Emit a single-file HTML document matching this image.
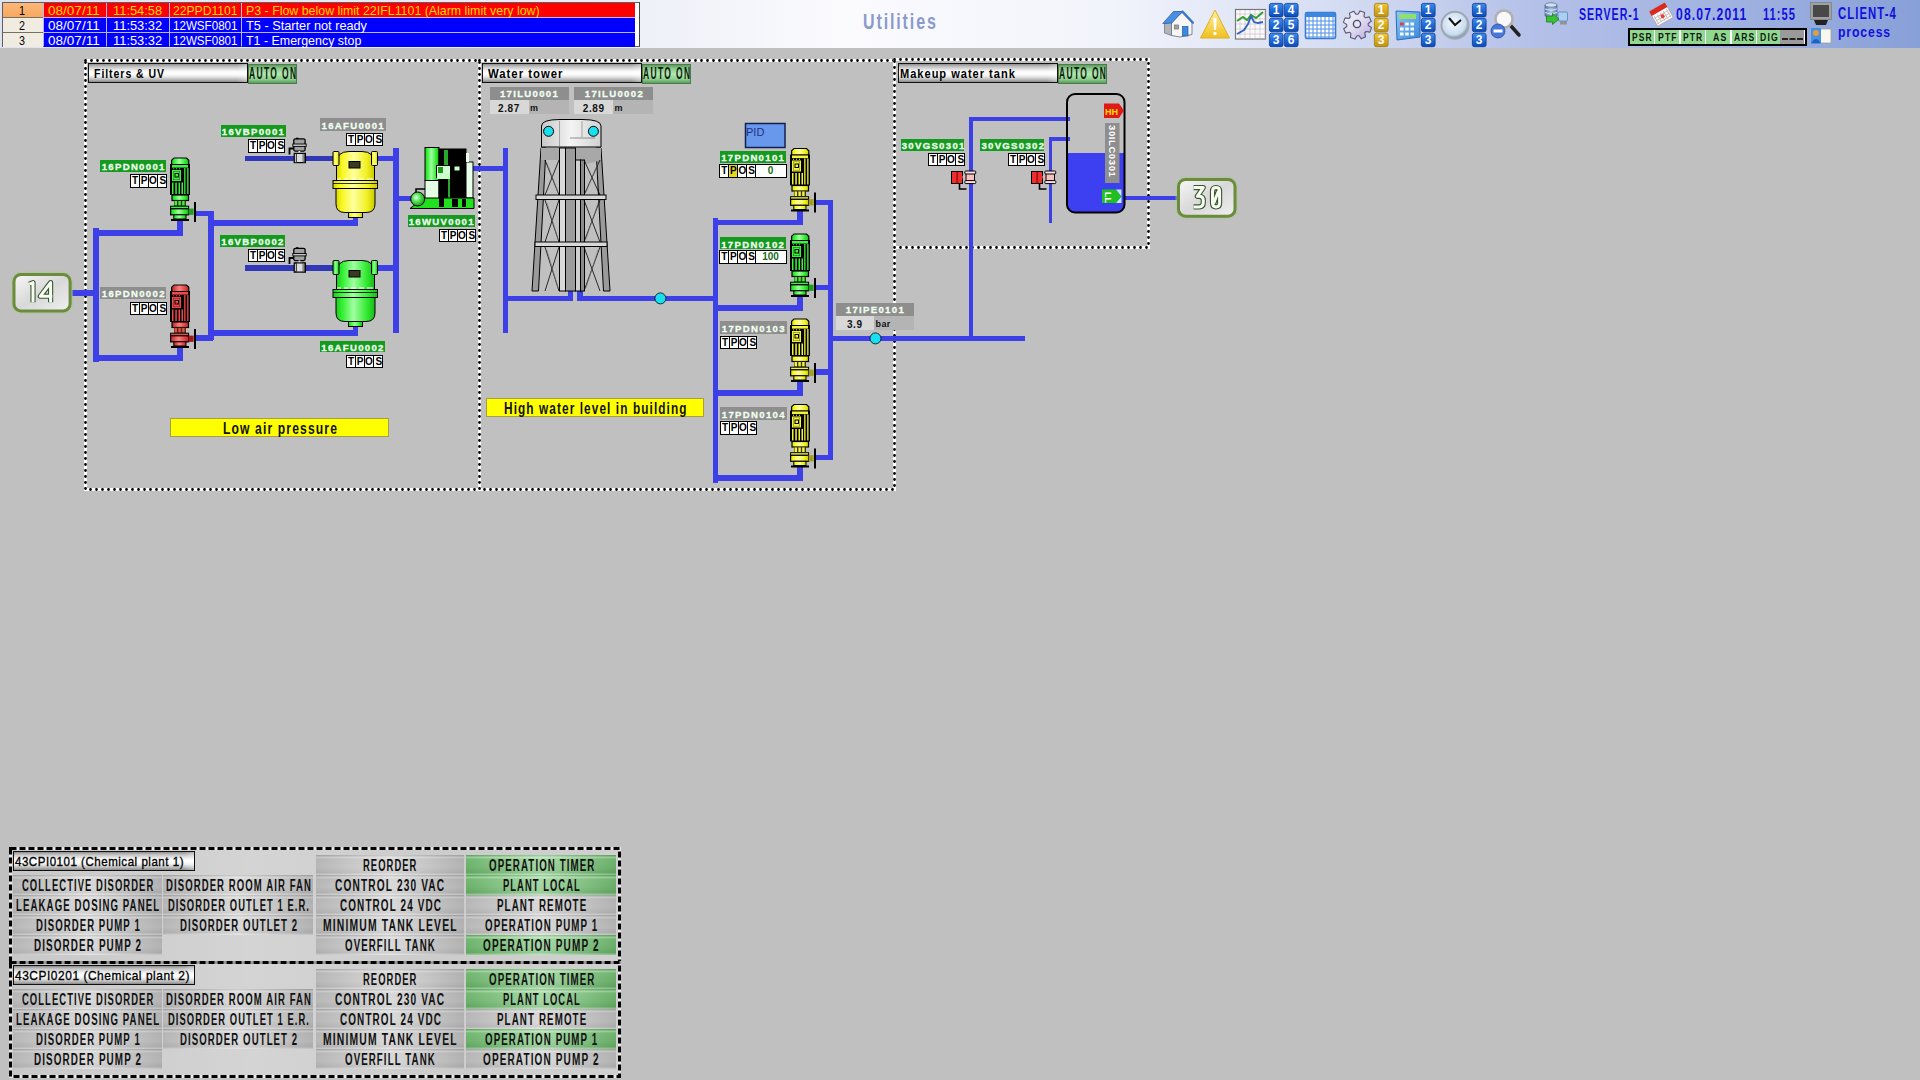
<!DOCTYPE html>
<html><head><meta charset="utf-8"><style>
*{box-sizing:border-box}
html,body{margin:0;padding:0}
body{width:1920px;height:1080px;background:#c0c0c0;position:relative;overflow:hidden;font-family:"Liberation Sans",sans-serif}
.a{position:absolute}
#hdr{left:0;top:0;width:1920px;height:48px;background:linear-gradient(90deg,#dde3f1 0%,#eef0f8 33%,#fbfbfe 44%,#f2f4fb 58%,#d4dcf2 70%,#b4c0e8 80%,#a0b2e0 90%,#88a0d8 100%)}
#alarm{left:2px;top:2px;width:638px;height:45px;border:1px solid #555;background:#fff}
.ar{position:absolute;left:0;width:633px;height:15px;font-size:11.5px;line-height:14px;white-space:nowrap}
.ar div{position:absolute;top:0;height:14px;padding-left:3px;overflow:hidden}
.title{left:842px;top:8px;width:115px;text-align:center;font-size:22px;font-weight:bold;color:#8d9fce;letter-spacing:1.5px}
.lbl{position:absolute;height:12px;font-size:9.6px;font-weight:bold;color:#f0fff0;text-align:center;letter-spacing:1.3px;white-space:nowrap;padding-left:1px;-webkit-text-stroke:.3px #f0fff0}
.g{background:#149a1e}
.gr{background:#8e8e8e}
.tp{position:absolute;height:13px;background:#fff;border:1.5px solid #000;font-size:10px;font-weight:bold;line-height:10.5px;white-space:nowrap}
.tp span{position:absolute;top:0;height:100%;line-height:12.5px;text-align:center;border-right:1.5px solid #000}
.pt{position:absolute;height:20px;border:1.6px solid #111;background:linear-gradient(#8c8c8c 0%,#c4c4c4 15%,#f8f8f8 40%,#fff 55%,#e8e8e8 70%,#b4b4b4 88%,#888 100%)}
.pt:after{content:"";position:absolute;right:0;top:0;bottom:0;width:10px;background:linear-gradient(90deg,rgba(255,255,255,0),rgba(255,255,255,.35))}
.au{position:absolute;height:20px;background:linear-gradient(#5c9c5c 0%,#8cc88c 20%,#b4e8b4 50%,#8ccc8c 80%,#5a9a5a 100%);border:1px solid #4c7c4c}
.au span,.btn span{display:inline-block;transform:scaleX(.82)}
.btn{position:absolute;height:20px;font-size:16.5px;line-height:21px;text-align:center;color:#111;white-space:nowrap;overflow:hidden;
 background:linear-gradient(#a8a8a8 0%,#d8d8d8 12%,#c4c4c4 20%,#c8c8c8 60%,#bcbcbc 88%,#dcdcdc 100%);}
.btn:before{content:"";position:absolute;left:0;top:0;right:0;bottom:0;background:linear-gradient(90deg,rgba(0,0,0,.08),rgba(255,255,255,.35) 50%,rgba(0,0,0,.1))}
.btn span{position:absolute;left:50%;top:0;transform:translateX(-50%) scaleX(.76)}
.gb{background:linear-gradient(#5aa85a 0%,#a6e0a6 12%,#7cc67c 20%,#74c074 60%,#68b468 88%,#a8dca8 100%)}
</style></head><body>
<div id="hdr" class="a"></div>
<div class="a" style="left:2px;top:2px;width:638px;height:45px;background:#b8b8f0;border:1px solid #606060;border-right:1px solid #404040"></div><div class="a" style="left:635px;top:3px;width:4px;height:43px;background:#fff"></div><div class="a" style="left:3px;top:3px;width:40px;height:14px;background:linear-gradient(#fcb878,#f8a860)"></div><span class="a" style="left:18.5px;top:5.33px;white-space:nowrap;transform-origin:0 0;transform:scaleX(0.8747);font-size:12.32px;line-height:12.32px;font-weight:normal;color:#000;">1</span><div class="a" style="left:44px;top:3px;width:62px;height:14px;background:#ff0000"></div><span class="a" style="left:48.3px;top:5.33px;white-space:nowrap;transform-origin:0 0;transform:scaleX(1.0996);font-size:12.32px;line-height:12.32px;font-weight:normal;color:#ffd800;">08/07/11</span><div class="a" style="left:107px;top:3px;width:62px;height:14px;background:#ff0000"></div><span class="a" style="left:113.3px;top:5.33px;white-space:nowrap;transform-origin:0 0;transform:scaleX(1.0465);font-size:12.32px;line-height:12.32px;font-weight:normal;color:#ffd800;">11:54:58</span><div class="a" style="left:170px;top:3px;width:71px;height:14px;background:#ff0000"></div><span class="a" style="left:172.5px;top:5.33px;white-space:nowrap;transform-origin:0 0;transform:scaleX(0.9847);font-size:12.32px;line-height:12.32px;font-weight:normal;color:#ffd800;">22PPD1101</span><div class="a" style="left:242px;top:3px;width:393px;height:14px;background:#ff0000"></div><span class="a" style="left:245.7px;top:5.33px;white-space:nowrap;transform-origin:0 0;transform:scaleX(1.0057);font-size:12.32px;line-height:12.32px;font-weight:normal;color:#ffd800;">P3 - Flow below limit 22IFL1101 (Alarm limit very low)</span><div class="a" style="left:3px;top:18px;width:40px;height:14px;background:#f0ece2"></div><span class="a" style="left:18.5px;top:20.33px;white-space:nowrap;transform-origin:0 0;transform:scaleX(0.8747);font-size:12.32px;line-height:12.32px;font-weight:normal;color:#000;">2</span><div class="a" style="left:44px;top:18px;width:62px;height:14px;background:#0000ff"></div><span class="a" style="left:48.3px;top:20.33px;white-space:nowrap;transform-origin:0 0;transform:scaleX(1.0996);font-size:12.32px;line-height:12.32px;font-weight:normal;color:#ffffff;">08/07/11</span><div class="a" style="left:107px;top:18px;width:62px;height:14px;background:#0000ff"></div><span class="a" style="left:113.3px;top:20.33px;white-space:nowrap;transform-origin:0 0;transform:scaleX(1.0465);font-size:12.32px;line-height:12.32px;font-weight:normal;color:#ffffff;">11:53:32</span><div class="a" style="left:170px;top:18px;width:71px;height:14px;background:#0000ff"></div><span class="a" style="left:172.5px;top:20.33px;white-space:nowrap;transform-origin:0 0;transform:scaleX(0.9423);font-size:12.32px;line-height:12.32px;font-weight:normal;color:#ffffff;">12WSF0801</span><div class="a" style="left:242px;top:18px;width:393px;height:14px;background:#0000ff"></div><span class="a" style="left:245.7px;top:20.33px;white-space:nowrap;transform-origin:0 0;transform:scaleX(1.0339);font-size:12.32px;line-height:12.32px;font-weight:normal;color:#ffffff;">T5 - Starter not ready</span><div class="a" style="left:3px;top:33px;width:40px;height:14px;background:#f0ece2"></div><span class="a" style="left:18.5px;top:35.33px;white-space:nowrap;transform-origin:0 0;transform:scaleX(0.8747);font-size:12.32px;line-height:12.32px;font-weight:normal;color:#000;">3</span><div class="a" style="left:44px;top:33px;width:62px;height:14px;background:#0000ff"></div><span class="a" style="left:48.3px;top:35.33px;white-space:nowrap;transform-origin:0 0;transform:scaleX(1.0996);font-size:12.32px;line-height:12.32px;font-weight:normal;color:#ffffff;">08/07/11</span><div class="a" style="left:107px;top:33px;width:62px;height:14px;background:#0000ff"></div><span class="a" style="left:113.3px;top:35.33px;white-space:nowrap;transform-origin:0 0;transform:scaleX(1.0465);font-size:12.32px;line-height:12.32px;font-weight:normal;color:#ffffff;">11:53:32</span><div class="a" style="left:170px;top:33px;width:71px;height:14px;background:#0000ff"></div><span class="a" style="left:172.5px;top:35.33px;white-space:nowrap;transform-origin:0 0;transform:scaleX(0.9423);font-size:12.32px;line-height:12.32px;font-weight:normal;color:#ffffff;">12WSF0801</span><div class="a" style="left:242px;top:33px;width:393px;height:14px;background:#0000ff"></div><span class="a" style="left:245.7px;top:35.33px;white-space:nowrap;transform-origin:0 0;transform:scaleX(1.0089);font-size:12.32px;line-height:12.32px;font-weight:normal;color:#ffffff;">T1 - Emergency stop</span><div class="a" style="left:3px;top:17px;width:40px;height:1px;background:#787060"></div><div class="a" style="left:3px;top:32px;width:40px;height:1px;background:#787060"></div><span class="a" style="left:862.8px;top:12.27px;white-space:nowrap;transform-origin:0 0;transform:scaleX(0.7475);font-size:21.45px;line-height:21.45px;font-weight:bold;color:#8a9acc;letter-spacing:2.5px">Utilities</span><svg class="a" style="left:0;top:0" width="1920" height="1080" viewBox="0 0 1920 1080">
<defs>
<linearGradient id="lgy" x1="0" x2="1"><stop offset="0" stop-color="#d8d800"/><stop offset=".15" stop-color="#f8f820"/><stop offset=".45" stop-color="#ffffa0"/><stop offset=".8" stop-color="#f0f020"/><stop offset="1" stop-color="#c8c800"/></linearGradient>
<linearGradient id="lgg" x1="0" x2="1"><stop offset="0" stop-color="#20c820"/><stop offset=".15" stop-color="#30f030"/><stop offset=".45" stop-color="#a0ffa0"/><stop offset=".8" stop-color="#30e830"/><stop offset="1" stop-color="#18b818"/></linearGradient>
<linearGradient id="lgr" x1="0" x2="1"><stop offset="0" stop-color="#c02020"/><stop offset=".45" stop-color="#ff8080"/><stop offset="1" stop-color="#c82020"/></linearGradient>
<linearGradient id="lgtank" x1="0" x2="1"><stop offset="0" stop-color="#c8c8c8"/><stop offset=".5" stop-color="#f4f4f4"/><stop offset="1" stop-color="#d0d0d0"/></linearGradient>
<radialGradient id="rgs" cx=".4" cy=".4" r=".6"><stop offset="0" stop-color="#e0ffe0"/><stop offset=".5" stop-color="#50e050"/><stop offset="1" stop-color="#20a020"/></radialGradient>
<linearGradient id="box" x1="0" y1="0" x2="1" y2="1"><stop offset="0" stop-color="#f8f8f8"/><stop offset=".5" stop-color="#d8d8d8"/><stop offset="1" stop-color="#f0f0f0"/></linearGradient>
</defs>
<rect x="85.5" y="60.5" width="394" height="429" fill="none" stroke="#fff" stroke-width="3"/>
<rect x="85.5" y="60.5" width="394" height="429" fill="none" stroke="#000" stroke-width="2.8" stroke-dasharray="0 6" stroke-linecap="round"/>
<rect x="479.5" y="60.5" width="415" height="429" fill="none" stroke="#fff" stroke-width="3"/>
<rect x="479.5" y="60.5" width="415" height="429" fill="none" stroke="#000" stroke-width="2.8" stroke-dasharray="0 6" stroke-linecap="round"/>
<rect x="894.5" y="59.5" width="254" height="188" fill="none" stroke="#fff" stroke-width="3"/>
<rect x="894.5" y="59.5" width="254" height="188" fill="none" stroke="#000" stroke-width="2.8" stroke-dasharray="0 6" stroke-linecap="round"/>
<rect x="72" y="290" width="24" height="6" fill="#3c40e6"/>
<rect x="93" y="228" width="6" height="134" fill="#3c40e6"/>
<rect x="93" y="230" width="90" height="6" fill="#3c40e6"/>
<rect x="177" y="216" width="6" height="20" fill="#3c40e6"/>
<rect x="93" y="355" width="90" height="6" fill="#3c40e6"/>
<rect x="177" y="342" width="6" height="19" fill="#3c40e6"/>
<rect x="195" y="211" width="18" height="5" fill="#3c40e6"/>
<rect x="208" y="211" width="6" height="129" fill="#3c40e6"/>
<rect x="195" y="335" width="18" height="6" fill="#3c40e6"/>
<rect x="208" y="220" width="150" height="6" fill="#3c40e6"/>
<rect x="353" y="215" width="5" height="11" fill="#3c40e6"/>
<rect x="208" y="330" width="150" height="6" fill="#3c40e6"/>
<rect x="353" y="324" width="5" height="12" fill="#3c40e6"/>
<rect x="378" y="156" width="18" height="5" fill="#3c40e6"/>
<rect x="378" y="265" width="18" height="6" fill="#3c40e6"/>
<rect x="393" y="148" width="6" height="185" fill="#3c40e6"/>
<rect x="399" y="196" width="13" height="5" fill="#3c40e6"/>
<rect x="473" y="166" width="32" height="5" fill="#3c40e6"/>
<rect x="503" y="148" width="5" height="185" fill="#3c40e6"/>
<rect x="503" y="296" width="70" height="5" fill="#3c40e6"/>
<rect x="568" y="289" width="5" height="12" fill="#3c40e6"/>
<rect x="577" y="289" width="6" height="12" fill="#3c40e6"/>
<rect x="577" y="296" width="141" height="5" fill="#3c40e6"/>
<rect x="713" y="218" width="5" height="265" fill="#3c40e6"/>
<rect x="713" y="220" width="90" height="5" fill="#3c40e6"/>
<rect x="713" y="305" width="90" height="6" fill="#3c40e6"/>
<rect x="713" y="390" width="90" height="6" fill="#3c40e6"/>
<rect x="713" y="475" width="90" height="6" fill="#3c40e6"/>
<rect x="797" y="209" width="6" height="16" fill="#3c40e6"/>
<rect x="797" y="295" width="6" height="16" fill="#3c40e6"/>
<rect x="797" y="380" width="6" height="16" fill="#3c40e6"/>
<rect x="797" y="466" width="6" height="15" fill="#3c40e6"/>
<rect x="814" y="200" width="19" height="5" fill="#3c40e6"/>
<rect x="814" y="285" width="19" height="5" fill="#3c40e6"/>
<rect x="814" y="369" width="19" height="6" fill="#3c40e6"/>
<rect x="814" y="455" width="19" height="5" fill="#3c40e6"/>
<rect x="828" y="200" width="5" height="260" fill="#3c40e6"/>
<rect x="833" y="336" width="192" height="5" fill="#3c40e6"/>
<rect x="969" y="117" width="4" height="224" fill="#3c40e6"/>
<rect x="969" y="117" width="101" height="4" fill="#3c40e6"/>
<rect x="1049" y="137" width="3" height="86" fill="#3c40e6"/>
<rect x="1049" y="137" width="21" height="4" fill="#3c40e6"/>
<rect x="1124" y="196" width="53" height="4" fill="#3c40e6"/>
<rect x="245" y="156" width="89" height="5" fill="#3038b8"/>
<rect x="245" y="265" width="89" height="6" fill="#3038b8"/>
<g transform="translate(170,157)">
<path d="M4 1 H16.5 L18.8 3.2 V7.5 H1.6 V3.2 Z" fill="url(#lgg)" stroke="#000" stroke-width="1.2"/>
<rect x="0" y="7" width="20" height="31" fill="#000"/>
<rect x="2" y="8" width="16" height="2.6" fill="#40f040"/>
<path d="M3 11.8 H4 M6 11.8 H7 M9 11.8 H10" stroke="#40f040" stroke-width="1"/>
<rect x="2" y="13" width="9" height="11" fill="#40f040"/>
<rect x="5" y="16.5" width="3.5" height="3.5" fill="#40f040" stroke="#000" stroke-width="1"/>
<rect x="3.3" y="14.3" width="6.4" height="8.4" fill="none" stroke="#000" stroke-width=".6" stroke-opacity=".5"/>
<rect x="14.2" y="11" width="1.3" height="26" fill="#40f040"/>
<rect x="17.2" y="11" width="1.3" height="26" fill="#40f040"/>
<rect x="2" y="25.5" width="1.5" height="11.5" fill="#40f040"/>
<rect x="5.3" y="25.5" width="1.5" height="11.5" fill="#40f040"/>
<rect x="8.5" y="25.5" width="1.5" height="11.5" fill="#40f040"/>
<rect x="11.5" y="25.5" width="1.5" height="11.5" fill="#40f040"/>
<rect x="2" y="38" width="16.5" height="5.5" fill="url(#lgg)" stroke="#000" stroke-width="1.2"/>
<rect x="4" y="43.5" width="12" height="5.5" fill="#3a3a10"/>
<rect x="4.6" y="44" width="2.4" height="4.5" fill="#40f040"/>
<rect x="8.4" y="44" width="2.4" height="4.5" fill="#40f040"/>
<rect x="12.2" y="44" width="2.4" height="4.5" fill="#40f040"/>
<rect x="0.6" y="49.2" width="18" height="2.6" fill="#40f040" stroke="#000" stroke-width="1"/>
<rect x="0.6" y="51.8" width="18" height="6" fill="url(#lgg)" stroke="#000" stroke-width="1.2"/>
<rect x="18.6" y="51.6" width="5" height="6.3" fill="#20a020"/>
<rect x="24" y="45" width="2" height="20" fill="#000"/>
<rect x="3.8" y="57.8" width="12.2" height="4.2" fill="url(#lgg)" stroke="#000" stroke-width="1"/>
<rect x="1" y="62" width="18" height="2" fill="#000"/>
</g>
<g transform="translate(170,284)">
<path d="M4 1 H16.5 L18.8 3.2 V7.5 H1.6 V3.2 Z" fill="url(#lgr)" stroke="#000" stroke-width="1.2"/>
<rect x="0" y="7" width="20" height="31" fill="#000"/>
<rect x="2" y="8" width="16" height="2.6" fill="#f04848"/>
<path d="M3 11.8 H4 M6 11.8 H7 M9 11.8 H10" stroke="#f04848" stroke-width="1"/>
<rect x="2" y="13" width="9" height="11" fill="#f04848"/>
<rect x="5" y="16.5" width="3.5" height="3.5" fill="#f04848" stroke="#000" stroke-width="1"/>
<rect x="3.3" y="14.3" width="6.4" height="8.4" fill="none" stroke="#000" stroke-width=".6" stroke-opacity=".5"/>
<rect x="14.2" y="11" width="1.3" height="26" fill="#f04848"/>
<rect x="17.2" y="11" width="1.3" height="26" fill="#f04848"/>
<rect x="2" y="25.5" width="1.5" height="11.5" fill="#f04848"/>
<rect x="5.3" y="25.5" width="1.5" height="11.5" fill="#f04848"/>
<rect x="8.5" y="25.5" width="1.5" height="11.5" fill="#f04848"/>
<rect x="11.5" y="25.5" width="1.5" height="11.5" fill="#f04848"/>
<rect x="2" y="38" width="16.5" height="5.5" fill="url(#lgr)" stroke="#000" stroke-width="1.2"/>
<rect x="4" y="43.5" width="12" height="5.5" fill="#3a3a10"/>
<rect x="4.6" y="44" width="2.4" height="4.5" fill="#f04848"/>
<rect x="8.4" y="44" width="2.4" height="4.5" fill="#f04848"/>
<rect x="12.2" y="44" width="2.4" height="4.5" fill="#f04848"/>
<rect x="0.6" y="49.2" width="18" height="2.6" fill="#f04848" stroke="#000" stroke-width="1"/>
<rect x="0.6" y="51.8" width="18" height="6" fill="url(#lgr)" stroke="#000" stroke-width="1.2"/>
<rect x="18.6" y="51.6" width="5" height="6.3" fill="#a01818"/>
<rect x="24" y="45" width="2" height="20" fill="#000"/>
<rect x="3.8" y="57.8" width="12.2" height="4.2" fill="url(#lgr)" stroke="#000" stroke-width="1"/>
<rect x="1" y="62" width="18" height="2" fill="#000"/>
</g>
<g transform="translate(790,147.5)">
<path d="M4 1 H16.5 L18.8 3.2 V7.5 H1.6 V3.2 Z" fill="url(#lgy)" stroke="#000" stroke-width="1.2"/>
<rect x="0" y="7" width="20" height="31" fill="#000"/>
<rect x="2" y="8" width="16" height="2.6" fill="#f4f440"/>
<path d="M3 11.8 H4 M6 11.8 H7 M9 11.8 H10" stroke="#f4f440" stroke-width="1"/>
<rect x="2" y="13" width="9" height="11" fill="#f4f440"/>
<rect x="5" y="16.5" width="3.5" height="3.5" fill="#f4f440" stroke="#000" stroke-width="1"/>
<rect x="3.3" y="14.3" width="6.4" height="8.4" fill="none" stroke="#000" stroke-width=".6" stroke-opacity=".5"/>
<rect x="14.2" y="11" width="1.3" height="26" fill="#f4f440"/>
<rect x="17.2" y="11" width="1.3" height="26" fill="#f4f440"/>
<rect x="2" y="25.5" width="1.5" height="11.5" fill="#f4f440"/>
<rect x="5.3" y="25.5" width="1.5" height="11.5" fill="#f4f440"/>
<rect x="8.5" y="25.5" width="1.5" height="11.5" fill="#f4f440"/>
<rect x="11.5" y="25.5" width="1.5" height="11.5" fill="#f4f440"/>
<rect x="2" y="38" width="16.5" height="5.5" fill="url(#lgy)" stroke="#000" stroke-width="1.2"/>
<rect x="4" y="43.5" width="12" height="5.5" fill="#3a3a10"/>
<rect x="4.6" y="44" width="2.4" height="4.5" fill="#f4f440"/>
<rect x="8.4" y="44" width="2.4" height="4.5" fill="#f4f440"/>
<rect x="12.2" y="44" width="2.4" height="4.5" fill="#f4f440"/>
<rect x="0.6" y="49.2" width="18" height="2.6" fill="#f4f440" stroke="#000" stroke-width="1"/>
<rect x="0.6" y="51.8" width="18" height="6" fill="url(#lgy)" stroke="#000" stroke-width="1.2"/>
<rect x="18.6" y="51.6" width="5" height="6.3" fill="#a0a020"/>
<rect x="24" y="45" width="2" height="20" fill="#000"/>
<rect x="3.8" y="57.8" width="12.2" height="4.2" fill="url(#lgy)" stroke="#000" stroke-width="1"/>
<rect x="1" y="62" width="18" height="2" fill="#000"/>
</g>
<g transform="translate(790,233)">
<path d="M4 1 H16.5 L18.8 3.2 V7.5 H1.6 V3.2 Z" fill="url(#lgg)" stroke="#000" stroke-width="1.2"/>
<rect x="0" y="7" width="20" height="31" fill="#000"/>
<rect x="2" y="8" width="16" height="2.6" fill="#40f040"/>
<path d="M3 11.8 H4 M6 11.8 H7 M9 11.8 H10" stroke="#40f040" stroke-width="1"/>
<rect x="2" y="13" width="9" height="11" fill="#40f040"/>
<rect x="5" y="16.5" width="3.5" height="3.5" fill="#40f040" stroke="#000" stroke-width="1"/>
<rect x="3.3" y="14.3" width="6.4" height="8.4" fill="none" stroke="#000" stroke-width=".6" stroke-opacity=".5"/>
<rect x="14.2" y="11" width="1.3" height="26" fill="#40f040"/>
<rect x="17.2" y="11" width="1.3" height="26" fill="#40f040"/>
<rect x="2" y="25.5" width="1.5" height="11.5" fill="#40f040"/>
<rect x="5.3" y="25.5" width="1.5" height="11.5" fill="#40f040"/>
<rect x="8.5" y="25.5" width="1.5" height="11.5" fill="#40f040"/>
<rect x="11.5" y="25.5" width="1.5" height="11.5" fill="#40f040"/>
<rect x="2" y="38" width="16.5" height="5.5" fill="url(#lgg)" stroke="#000" stroke-width="1.2"/>
<rect x="4" y="43.5" width="12" height="5.5" fill="#3a3a10"/>
<rect x="4.6" y="44" width="2.4" height="4.5" fill="#40f040"/>
<rect x="8.4" y="44" width="2.4" height="4.5" fill="#40f040"/>
<rect x="12.2" y="44" width="2.4" height="4.5" fill="#40f040"/>
<rect x="0.6" y="49.2" width="18" height="2.6" fill="#40f040" stroke="#000" stroke-width="1"/>
<rect x="0.6" y="51.8" width="18" height="6" fill="url(#lgg)" stroke="#000" stroke-width="1.2"/>
<rect x="18.6" y="51.6" width="5" height="6.3" fill="#20a020"/>
<rect x="24" y="45" width="2" height="20" fill="#000"/>
<rect x="3.8" y="57.8" width="12.2" height="4.2" fill="url(#lgg)" stroke="#000" stroke-width="1"/>
<rect x="1" y="62" width="18" height="2" fill="#000"/>
</g>
<g transform="translate(790,318)">
<path d="M4 1 H16.5 L18.8 3.2 V7.5 H1.6 V3.2 Z" fill="url(#lgy)" stroke="#000" stroke-width="1.2"/>
<rect x="0" y="7" width="20" height="31" fill="#000"/>
<rect x="2" y="8" width="16" height="2.6" fill="#f4f440"/>
<path d="M3 11.8 H4 M6 11.8 H7 M9 11.8 H10" stroke="#f4f440" stroke-width="1"/>
<rect x="2" y="13" width="9" height="11" fill="#f4f440"/>
<rect x="5" y="16.5" width="3.5" height="3.5" fill="#f4f440" stroke="#000" stroke-width="1"/>
<rect x="3.3" y="14.3" width="6.4" height="8.4" fill="none" stroke="#000" stroke-width=".6" stroke-opacity=".5"/>
<rect x="14.2" y="11" width="1.3" height="26" fill="#f4f440"/>
<rect x="17.2" y="11" width="1.3" height="26" fill="#f4f440"/>
<rect x="2" y="25.5" width="1.5" height="11.5" fill="#f4f440"/>
<rect x="5.3" y="25.5" width="1.5" height="11.5" fill="#f4f440"/>
<rect x="8.5" y="25.5" width="1.5" height="11.5" fill="#f4f440"/>
<rect x="11.5" y="25.5" width="1.5" height="11.5" fill="#f4f440"/>
<rect x="2" y="38" width="16.5" height="5.5" fill="url(#lgy)" stroke="#000" stroke-width="1.2"/>
<rect x="4" y="43.5" width="12" height="5.5" fill="#3a3a10"/>
<rect x="4.6" y="44" width="2.4" height="4.5" fill="#f4f440"/>
<rect x="8.4" y="44" width="2.4" height="4.5" fill="#f4f440"/>
<rect x="12.2" y="44" width="2.4" height="4.5" fill="#f4f440"/>
<rect x="0.6" y="49.2" width="18" height="2.6" fill="#f4f440" stroke="#000" stroke-width="1"/>
<rect x="0.6" y="51.8" width="18" height="6" fill="url(#lgy)" stroke="#000" stroke-width="1.2"/>
<rect x="18.6" y="51.6" width="5" height="6.3" fill="#a0a020"/>
<rect x="24" y="45" width="2" height="20" fill="#000"/>
<rect x="3.8" y="57.8" width="12.2" height="4.2" fill="url(#lgy)" stroke="#000" stroke-width="1"/>
<rect x="1" y="62" width="18" height="2" fill="#000"/>
</g>
<g transform="translate(790,403.5)">
<path d="M4 1 H16.5 L18.8 3.2 V7.5 H1.6 V3.2 Z" fill="url(#lgy)" stroke="#000" stroke-width="1.2"/>
<rect x="0" y="7" width="20" height="31" fill="#000"/>
<rect x="2" y="8" width="16" height="2.6" fill="#f4f440"/>
<path d="M3 11.8 H4 M6 11.8 H7 M9 11.8 H10" stroke="#f4f440" stroke-width="1"/>
<rect x="2" y="13" width="9" height="11" fill="#f4f440"/>
<rect x="5" y="16.5" width="3.5" height="3.5" fill="#f4f440" stroke="#000" stroke-width="1"/>
<rect x="3.3" y="14.3" width="6.4" height="8.4" fill="none" stroke="#000" stroke-width=".6" stroke-opacity=".5"/>
<rect x="14.2" y="11" width="1.3" height="26" fill="#f4f440"/>
<rect x="17.2" y="11" width="1.3" height="26" fill="#f4f440"/>
<rect x="2" y="25.5" width="1.5" height="11.5" fill="#f4f440"/>
<rect x="5.3" y="25.5" width="1.5" height="11.5" fill="#f4f440"/>
<rect x="8.5" y="25.5" width="1.5" height="11.5" fill="#f4f440"/>
<rect x="11.5" y="25.5" width="1.5" height="11.5" fill="#f4f440"/>
<rect x="2" y="38" width="16.5" height="5.5" fill="url(#lgy)" stroke="#000" stroke-width="1.2"/>
<rect x="4" y="43.5" width="12" height="5.5" fill="#3a3a10"/>
<rect x="4.6" y="44" width="2.4" height="4.5" fill="#f4f440"/>
<rect x="8.4" y="44" width="2.4" height="4.5" fill="#f4f440"/>
<rect x="12.2" y="44" width="2.4" height="4.5" fill="#f4f440"/>
<rect x="0.6" y="49.2" width="18" height="2.6" fill="#f4f440" stroke="#000" stroke-width="1"/>
<rect x="0.6" y="51.8" width="18" height="6" fill="url(#lgy)" stroke="#000" stroke-width="1.2"/>
<rect x="18.6" y="51.6" width="5" height="6.3" fill="#a0a020"/>
<rect x="24" y="45" width="2" height="20" fill="#000"/>
<rect x="3.8" y="57.8" width="12.2" height="4.2" fill="url(#lgy)" stroke="#000" stroke-width="1"/>
<rect x="1" y="62" width="18" height="2" fill="#000"/>
</g>
<g transform="translate(332,151)" stroke="#000" stroke-width="1">
<path d="M4.5 30 L4.5 13 Q4.5 0.5 17 0.5 L30 0.5 Q42.5 0.5 42.5 13 L42.5 30 Z" fill="url(#lgy)"/>
<rect x="1" y="0.5" width="6" height="14" rx="1" fill="url(#lgy)"/>
<rect x="39.5" y="0.5" width="6" height="14" rx="1" fill="url(#lgy)"/>
<rect x="17" y="10.5" width="11" height="6.5" fill="#3a3a20"/>
<path d="M5 28 H9 M12 28 H16 M19 28 H24 M27 28 H32 M35 28 H41" stroke="#fff" stroke-width="1.2"/>
<rect x="1" y="29.5" width="44.5" height="8" fill="url(#lgy)"/>
<line x1="1" y1="32.5" x2="45.5" y2="32.5" stroke-width=".8"/>
<path d="M4 37.5 L4 53 Q4 61.5 13 61.5 L34 61.5 Q43 61.5 43 53 L43 37.5 Z" fill="url(#lgy)"/>
<rect x="16.5" y="61.5" width="14" height="5" fill="url(#lgy)"/>
</g>
<g transform="translate(332,260)" stroke="#000" stroke-width="1">
<path d="M4.5 30 L4.5 13 Q4.5 0.5 17 0.5 L30 0.5 Q42.5 0.5 42.5 13 L42.5 30 Z" fill="url(#lgg)"/>
<rect x="1" y="0.5" width="6" height="14" rx="1" fill="url(#lgg)"/>
<rect x="39.5" y="0.5" width="6" height="14" rx="1" fill="url(#lgg)"/>
<rect x="17" y="10.5" width="11" height="6.5" fill="#3a3a20"/>
<path d="M5 28 H9 M12 28 H16 M19 28 H24 M27 28 H32 M35 28 H41" stroke="#fff" stroke-width="1.2"/>
<rect x="1" y="29.5" width="44.5" height="8" fill="url(#lgg)"/>
<line x1="1" y1="32.5" x2="45.5" y2="32.5" stroke-width=".8"/>
<path d="M4 37.5 L4 53 Q4 61.5 13 61.5 L34 61.5 Q43 61.5 43 53 L43 37.5 Z" fill="url(#lgg)"/>
<rect x="16.5" y="61.5" width="14" height="5" fill="url(#lgg)"/>
</g>
<g transform="translate(288.5,138)" stroke="#000">
<rect x="5.3" y="0.8" width="11.3" height="12.3" rx="1.5" fill="#a0a0a0" stroke-width="1.3"/>
<rect x="7.5" y="-0.3" width="2.5" height="1.5" fill="#000" stroke="none"/>
<rect x="4.3" y="6" width="13.4" height="2.4" fill="#c8c8c8" stroke-width=".9"/>
<rect x="10" y="13" width="1.8" height="3" fill="#e8e8e8" stroke="none"/>
<rect x="5.7" y="15.4" width="11.2" height="9.2" fill="#dcdcdc" stroke-width="1.2"/>
<rect x="6.4" y="15.4" width="1.6" height="9.2" fill="#fff" stroke-width=".7"/>
<rect x="14.6" y="15.4" width="1.6" height="9.2" fill="#fff" stroke-width=".7"/>
<path d="M1 16.5 V10.5 H5.3" fill="none" stroke-width="1.8"/>
</g>
<g transform="translate(288.5,247.5)" stroke="#000">
<rect x="5.3" y="0.8" width="11.3" height="12.3" rx="1.5" fill="#a0a0a0" stroke-width="1.3"/>
<rect x="7.5" y="-0.3" width="2.5" height="1.5" fill="#000" stroke="none"/>
<rect x="4.3" y="6" width="13.4" height="2.4" fill="#c8c8c8" stroke-width=".9"/>
<rect x="10" y="13" width="1.8" height="3" fill="#e8e8e8" stroke="none"/>
<rect x="5.7" y="15.4" width="11.2" height="9.2" fill="#dcdcdc" stroke-width="1.2"/>
<rect x="6.4" y="15.4" width="1.6" height="9.2" fill="#fff" stroke-width=".7"/>
<rect x="14.6" y="15.4" width="1.6" height="9.2" fill="#fff" stroke-width=".7"/>
<path d="M1 16.5 V10.5 H5.3" fill="none" stroke-width="1.8"/>
</g>
<g transform="translate(950,171)" stroke="#000" stroke-width="1">
<rect x="1.5" y="0.5" width="11" height="12" fill="#f03030"/>
<rect x="6.3" y="0.5" width="1.6" height="12" fill="#a01010" stroke="none"/>
<rect x="12.5" y="5" width="3" height="2.5" fill="#f4b0b0" stroke="none"/>
<rect x="16" y="2" width="8.5" height="9" fill="#f4c0c0"/>
<rect x="14.8" y="0" width="11" height="3" rx="1" fill="#fce0e0"/>
<rect x="14.8" y="9.6" width="11" height="3" rx="1" fill="#fce0e0"/>
<path d="M9.5 12.5 L9.5 18 L16.5 18" fill="none" stroke-width="1.6"/>
</g>
<g transform="translate(1030,171)" stroke="#000" stroke-width="1">
<rect x="1.5" y="0.5" width="11" height="12" fill="#f03030"/>
<rect x="6.3" y="0.5" width="1.6" height="12" fill="#a01010" stroke="none"/>
<rect x="12.5" y="5" width="3" height="2.5" fill="#f4b0b0" stroke="none"/>
<rect x="16" y="2" width="8.5" height="9" fill="#f4c0c0"/>
<rect x="14.8" y="0" width="11" height="3" rx="1" fill="#fce0e0"/>
<rect x="14.8" y="9.6" width="11" height="3" rx="1" fill="#fce0e0"/>
<path d="M9.5 12.5 L9.5 18 L16.5 18" fill="none" stroke-width="1.6"/>
</g>
<g stroke="#000" stroke-width="1">
<rect x="425" y="147.5" width="14" height="33" fill="url(#lgg)"/>
<rect x="425" y="180.5" width="14" height="18" fill="#e4ffe4"/>
<rect x="439" y="149" width="27" height="57" fill="#000"/>
<rect x="444" y="150" width="4" height="24" fill="#2aa82a" stroke="none"/>
<rect x="448" y="173" width="2" height="25" fill="#2aa82a" stroke="none"/>
<rect x="436.5" y="165.5" width="14" height="12" fill="#cfffcf"/>
<rect x="438" y="167" width="5" height="6" fill="#1a9a1a" stroke="none"/>
<rect x="437" y="174" width="13" height="5" fill="#c8ffc8" stroke="none"/>
<rect x="454" y="166" width="6" height="5" fill="#cfffcf"/>
<rect x="466" y="162" width="7" height="36" fill="#e8ffe8"/>
<rect x="466" y="153" width="3" height="9" fill="#e8ffe8" stroke="none"/>
<path d="M424 198 L474 198 L474 208.5 L410 208.5 Z" fill="#20e020"/>
<rect x="439" y="198" width="5" height="9" fill="#000" stroke="none"/><rect x="452" y="199" width="6" height="8" fill="#000" stroke="none"/><rect x="462" y="199" width="4" height="8" fill="#000" stroke="none"/>
<circle cx="417.7" cy="199" r="7" fill="url(#rgs)"/>
<path d="M416 192 L416 189 L425 189" fill="none" stroke-width="1.5"/>
</g>
<g stroke="#000" stroke-width="1">
<path d="M532 291 L541 148 L546 148 L538.5 291 Z" fill="#9a9a9a"/>
<path d="M610 291 L601 148 L596 148 L603.5 291 Z" fill="#9a9a9a"/>
<path d="M541 148 L601 148 L601 160 Q580 168 560 160 L541 160 Z" fill="#a8a8a8" stroke="none"/>
<rect x="559.5" y="148" width="6" height="143" fill="#d8d8d8"/>
<rect x="565.5" y="148" width="10" height="143" fill="#9c9c9c"/>
<rect x="575.5" y="160" width="5" height="131" fill="#d0d0d0"/>
<rect x="580.5" y="160" width="4" height="131" fill="#8a8a8a"/>
<path d="M545 160 L559 195 M559 160 L545 195 M584 160 L600 195 M600 160 L584 195" stroke-width=".8" fill="none"/>
<path d="M547 163 L558 192 M586 192 L598 163" stroke="#777" stroke-width=".6" fill="none"/>
<path d="M545 200 L559 242 M559 200 L545 242 M584 200 L600 242 M600 200 L584 242" stroke-width=".8" fill="none"/>
<path d="M547 203 L558 239 M586 239 L598 203" stroke="#777" stroke-width=".6" fill="none"/>
<path d="M545 247 L559 291 M559 247 L545 291 M584 247 L600 291 M600 247 L584 291" stroke-width=".8" fill="none"/>
<path d="M547 250 L558 288 M586 288 L598 250" stroke="#777" stroke-width=".6" fill="none"/>
<rect x="536" y="195" width="70" height="4.5" fill="#d8d8d8"/>
<rect x="535" y="242" width="72" height="4.5" fill="#d8d8d8"/>
<path d="M541.5 147 L541.5 126 Q541.5 119.5 560 119.5 L582 119.5 Q601 119.5 601 126 L601 147 Z" fill="url(#lgtank)"/>
<line x1="559.5" y1="121" x2="559.5" y2="147" stroke="#777" stroke-width=".6"/>
<line x1="582" y1="121" x2="582" y2="137" stroke="#777" stroke-width=".6"/>
<line x1="570" y1="138" x2="595" y2="138" stroke="#777" stroke-width=".8"/>
<circle cx="548.6" cy="131.3" r="5" fill="#18e0f0"/>
<circle cx="593.4" cy="131.3" r="5" fill="#18e0f0"/>
</g>
<circle cx="660.4" cy="298.4" r="5.5" fill="#18e0f0" stroke="#000" stroke-width=".8"/>
<circle cx="875.5" cy="338.4" r="5.5" fill="#18e0f0" stroke="#000" stroke-width=".8"/>
<rect x="745.5" y="123.5" width="39.5" height="24" fill="#6898ec" stroke="#102050" stroke-width="1.5"/>
<text x="746" y="136" font-family="Liberation Sans" font-size="11" fill="#203080">PID</text>
<path d="M1067 153 L1124.5 153 L1124.5 204 Q1124.5 212.5 1116 212.5 L1075 212.5 Q1067 212.5 1067 204 Z" fill="#3c40f0"/>
<rect x="1067" y="94" width="57.5" height="118.5" rx="8" fill="none" stroke="#000" stroke-width="2"/>
<path d="M1104 103.5 L1119 103.5 L1124 110.5 L1119 118 L1104 118 Z" fill="#e01818"/>
<text x="1105" y="114.5" font-family="Liberation Sans" font-weight="bold" font-size="9" fill="#ffe000">HH</text>
<rect x="1105" y="123" width="14.5" height="60" fill="#8e8e8e"/>
<text transform="translate(1108.5,125) rotate(90)" font-family="Liberation Sans" font-weight="bold" font-size="9.5" fill="#fff" letter-spacing=".6">30ILC0301</text>
<path d="M1102 189.5 L1116 189.5 L1121.5 196.5 L1116 203 L1102 203 Z" fill="#20c020"/>
<path d="M1116 189.5 L1121.5 189.5 L1121.5 203 L1116 203 L1121.5 196.5 Z" fill="#c8e8f8"/>
<text transform="translate(1105,192) rotate(90)" font-family="Liberation Sans" font-weight="bold" font-size="9" fill="#fff">LL</text>
<rect x="14.0" y="274.5" width="56.099999999999994" height="36.39999999999998" rx="8" fill="none" stroke="#a8c890" stroke-opacity=".5" stroke-width="6"/>
<rect x="14.0" y="274.5" width="56.099999999999994" height="36.39999999999998" rx="7" fill="url(#box)" stroke="#6a8c3c" stroke-width="3"/>
<path d="M29.3 284.2 L33 282.6 V302.3 M50.6 302.3 V282.6 L40.3 296.2 H52.4" fill="none" stroke="#3c5434" stroke-width="5.2" stroke-linejoin="round"/>
<path d="M29.3 284.2 L33 282.6 V302.3 M50.6 302.3 V282.6 L40.3 296.2 H52.4" fill="none" stroke="#f6fff0" stroke-width="3" stroke-linejoin="round"/>
<rect x="1178.5" y="179.5" width="56.5" height="36.69999999999999" rx="8" fill="none" stroke="#a8c890" stroke-opacity=".5" stroke-width="6"/>
<rect x="1178.5" y="179.5" width="56.5" height="36.69999999999999" rx="7" fill="url(#box)" stroke="#6a8c3c" stroke-width="3"/>
<path d="M1193.6 187.6 H1203.3 L1197.3 196.3 H1199.2 Q1203.3 196.3 1203.3 200.5 V202.6 Q1203.3 206.9 1199.2 206.9 H1193.6 M1216 187.6 Q1219.6 187.6 1219.6 191.5 V203 Q1219.6 206.9 1216 206.9 Q1212.5 206.9 1212.5 203 V191.5 Q1212.5 187.6 1216 187.6 Z M1213.6 203.5 L1218.5 191" fill="none" stroke="#3c5434" stroke-width="5.2" stroke-linejoin="round"/>
<path d="M1193.6 187.6 H1203.3 L1197.3 196.3 H1199.2 Q1203.3 196.3 1203.3 200.5 V202.6 Q1203.3 206.9 1199.2 206.9 H1193.6 M1216 187.6 Q1219.6 187.6 1219.6 191.5 V203 Q1219.6 206.9 1216 206.9 Q1212.5 206.9 1212.5 203 V191.5 Q1212.5 187.6 1216 187.6 Z M1213.6 203.5 L1218.5 191" fill="none" stroke="#f6fff0" stroke-width="3" stroke-linejoin="round"/>
</svg>
<div class="lbl g" style="left:220.5px;top:125px;width:65.0px;height:12px;line-height:14.5px">16VBP0001</div>
<div class="tp" style="left:248px;top:139px;width:37px;height:13.5px"><span style="left:0px;width:9px">T</span><span style="left:9px;width:9px">P</span><span style="left:18px;width:9px">O</span><span style="left:27.5px;width:8.5px;border-right:none">S</span></div>
<div class="lbl gr" style="left:320px;top:117.5px;width:65.5px;height:13.0px;line-height:15.5px">16AFU0001</div>
<div class="tp" style="left:346px;top:132.5px;width:37px;height:13.5px"><span style="left:0px;width:9px">T</span><span style="left:9px;width:9px">P</span><span style="left:18px;width:9px">O</span><span style="left:27.5px;width:8.5px;border-right:none">S</span></div>
<div class="lbl g" style="left:100.4px;top:160px;width:65.6px;height:12px;line-height:14.5px">16PDN0001</div>
<div class="tp" style="left:130px;top:174px;width:37px;height:13.5px"><span style="left:0px;width:9px">T</span><span style="left:9px;width:9px">P</span><span style="left:18px;width:9px">O</span><span style="left:27.5px;width:8.5px;border-right:none">S</span></div>
<div class="lbl gr" style="left:100.4px;top:286.7px;width:65.79999999999998px;height:12.199999999999989px;line-height:14.699999999999989px">16PDN0002</div>
<div class="tp" style="left:130px;top:301.5px;width:37px;height:13.5px"><span style="left:0px;width:9px">T</span><span style="left:9px;width:9px">P</span><span style="left:18px;width:9px">O</span><span style="left:27.5px;width:8.5px;border-right:none">S</span></div>
<div class="lbl g" style="left:220px;top:235px;width:65px;height:12px;line-height:14.5px">16VBP0002</div>
<div class="tp" style="left:248px;top:248.5px;width:37px;height:13.5px"><span style="left:0px;width:9px">T</span><span style="left:9px;width:9px">P</span><span style="left:18px;width:9px">O</span><span style="left:27.5px;width:8.5px;border-right:none">S</span></div>
<div class="lbl g" style="left:320px;top:340.5px;width:65px;height:11.5px;line-height:14.0px">16AFU0002</div>
<div class="tp" style="left:346px;top:354.5px;width:37px;height:13.5px"><span style="left:0px;width:9px">T</span><span style="left:9px;width:9px">P</span><span style="left:18px;width:9px">O</span><span style="left:27.5px;width:8.5px;border-right:none">S</span></div>
<div class="lbl g" style="left:407.5px;top:215px;width:67.5px;height:11.5px;line-height:14.0px">16WUV0001</div>
<div class="tp" style="left:439px;top:228.5px;width:37px;height:13.5px"><span style="left:0px;width:9px">T</span><span style="left:9px;width:9px">P</span><span style="left:18px;width:9px">O</span><span style="left:27.5px;width:8.5px;border-right:none">S</span></div>
<div class="lbl g" style="left:719.7px;top:150.5px;width:66.0px;height:12.300000000000011px;line-height:14.800000000000011px">17PDN0101</div>
<div class="tp" style="left:719.3px;top:164px;width:67.40000000000009px;height:13.5px"><span style="left:0px;width:9px">T</span><span style="left:9px;width:9px;background:#e8d820">P</span><span style="left:18px;width:9px">O</span><span style="left:27.5px;width:8.5px">S</span><span style="left:36px;width:28.40000000000009px;border:none;color:#1a6a1a;font-size:10px">0</span></div>
<div class="lbl g" style="left:719.7px;top:236.7px;width:66.0px;height:12.800000000000011px;line-height:15.300000000000011px">17PDN0102</div>
<div class="tp" style="left:719.3px;top:250.4px;width:67.40000000000009px;height:13.5px"><span style="left:0px;width:9px">T</span><span style="left:9px;width:9px">P</span><span style="left:18px;width:9px">O</span><span style="left:27.5px;width:8.5px">S</span><span style="left:36px;width:28.40000000000009px;border:none;color:#1a6a1a;font-size:10px">100</span></div>
<div class="lbl gr" style="left:720px;top:321.3px;width:66.70000000000005px;height:13.0px;line-height:15.5px">17PDN0103</div>
<div class="tp" style="left:720px;top:335.5px;width:37px;height:13.5px"><span style="left:0px;width:9px">T</span><span style="left:9px;width:9px">P</span><span style="left:18px;width:9px">O</span><span style="left:27.5px;width:8.5px;border-right:none">S</span></div>
<div class="lbl gr" style="left:720px;top:407.4px;width:66.70000000000005px;height:13.0px;line-height:15.5px">17PDN0104</div>
<div class="tp" style="left:720px;top:421.3px;width:37px;height:13.5px"><span style="left:0px;width:9px">T</span><span style="left:9px;width:9px">P</span><span style="left:18px;width:9px">O</span><span style="left:27.5px;width:8.5px;border-right:none">S</span></div>
<div class="lbl g" style="left:900.7px;top:139.3px;width:63.69999999999993px;height:12.0px;line-height:14.5px">30VGS0301</div>
<div class="tp" style="left:928px;top:152.5px;width:37px;height:13.5px"><span style="left:0px;width:9px">T</span><span style="left:9px;width:9px">P</span><span style="left:18px;width:9px">O</span><span style="left:27.5px;width:8.5px;border-right:none">S</span></div>
<div class="lbl g" style="left:980.4px;top:139.3px;width:63.30000000000007px;height:12.0px;line-height:14.5px">30VGS0302</div>
<div class="tp" style="left:1008px;top:152.5px;width:37px;height:13.5px"><span style="left:0px;width:9px">T</span><span style="left:9px;width:9px">P</span><span style="left:18px;width:9px">O</span><span style="left:27.5px;width:8.5px;border-right:none">S</span></div>
<div class="lbl gr" style="left:489.5px;top:86.5px;width:79.0px;height:13px;line-height:13px">17ILU0001</div>
<div class="a" style="left:489.5px;top:99.5px;width:79.0px;height:14px;background:#b4b4b4"></div>
<div class="a" style="left:489.5px;top:99.5px;width:39.0px;height:14px;background:#d8d8d8;font-size:10px;font-weight:bold;color:#111;text-align:center;line-height:17px;letter-spacing:.6px">2.87</div>
<div class="a" style="left:530.0px;top:99.5px;font-size:9px;font-weight:bold;color:#111;line-height:16px;letter-spacing:.4px">m</div>
<div class="lbl gr" style="left:574.4px;top:86.5px;width:79.10000000000002px;height:13px;line-height:13px">17ILU0002</div>
<div class="a" style="left:574.4px;top:99.5px;width:79.10000000000002px;height:14px;background:#b4b4b4"></div>
<div class="a" style="left:574.4px;top:99.5px;width:38.60000000000002px;height:14px;background:#d8d8d8;font-size:10px;font-weight:bold;color:#111;text-align:center;line-height:17px;letter-spacing:.6px">2.89</div>
<div class="a" style="left:614.5px;top:99.5px;font-size:9px;font-weight:bold;color:#111;line-height:16px;letter-spacing:.4px">m</div>
<div class="lbl gr" style="left:835.5px;top:303.3px;width:78.89999999999998px;height:13px;line-height:13px">17IPE0101</div>
<div class="a" style="left:835.5px;top:316.3px;width:78.89999999999998px;height:14px;background:#b4b4b4"></div>
<div class="a" style="left:835.5px;top:316.3px;width:38.5px;height:14px;background:#d8d8d8;font-size:10px;font-weight:bold;color:#111;text-align:center;line-height:17px;letter-spacing:.6px">3.9</div>
<div class="a" style="left:875.5px;top:316.3px;font-size:9px;font-weight:bold;color:#111;line-height:16px;letter-spacing:.4px">bar</div>
<div class="pt" style="left:88px;top:63px;width:160px"></div>
<span class="a" style="left:93.75px;top:67.34px;white-space:nowrap;transform-origin:0 0;transform:scaleX(0.7824);font-size:13.48px;line-height:13.48px;font-weight:bold;color:#000;letter-spacing:1.2px">Filters &amp; UV</span>
<div class="au" style="left:248px;top:63.5px;width:49px"></div>
<span class="a" style="left:248.75px;top:65.8px;white-space:nowrap;transform-origin:0 0;transform:scaleX(0.5412);font-size:15.65px;line-height:15.65px;font-weight:bold;color:#0c200c;letter-spacing:2.5px">AUTO ON</span>
<div class="pt" style="left:482px;top:63px;width:159.5px"></div>
<span class="a" style="left:488px;top:67.34px;white-space:nowrap;transform-origin:0 0;transform:scaleX(0.8408);font-size:13.48px;line-height:13.48px;font-weight:bold;color:#000;letter-spacing:1.2px">Water tower</span>
<div class="au" style="left:641.5px;top:63.5px;width:49.5px"></div>
<span class="a" style="left:642.7px;top:65.8px;white-space:nowrap;transform-origin:0 0;transform:scaleX(0.5428);font-size:15.65px;line-height:15.65px;font-weight:bold;color:#0c200c;letter-spacing:2.5px">AUTO ON</span>
<div class="pt" style="left:898px;top:63px;width:159.5999999999999px"></div>
<span class="a" style="left:900.2px;top:67.34px;white-space:nowrap;transform-origin:0 0;transform:scaleX(0.8217);font-size:13.48px;line-height:13.48px;font-weight:bold;color:#000;letter-spacing:1.2px">Makeup water tank</span>
<div class="au" style="left:1057.6px;top:63.5px;width:49.100000000000136px"></div>
<span class="a" style="left:1058.9px;top:65.8px;white-space:nowrap;transform-origin:0 0;transform:scaleX(0.5406);font-size:15.65px;line-height:15.65px;font-weight:bold;color:#0c200c;letter-spacing:2.5px">AUTO ON</span>
<div class="a" style="left:170px;top:418.3px;width:219.39999999999998px;height:19.0px;background:#ffff00;border:1px solid #a8a040"></div>
<span class="a" style="left:222.5px;top:420.0px;white-space:nowrap;transform-origin:0 0;transform:scaleX(0.7477);font-size:16.23px;line-height:16.23px;font-weight:bold;color:#111;letter-spacing:1.5px">Low air pressure</span>
<div class="a" style="left:485.6px;top:398.2px;width:218.60000000000002px;height:19.19999999999999px;background:#ffff00;border:1px solid #a8a040"></div>
<span class="a" style="left:503.9px;top:399.9px;white-space:nowrap;transform-origin:0 0;transform:scaleX(0.7287);font-size:16.23px;line-height:16.23px;font-weight:bold;color:#111;letter-spacing:1.5px">High water level in building</span>
<div class="a" style="left:11px;top:849px;width:608px;height:227px;background:linear-gradient(90deg,#c8c8c8,#d4d4d4 40%,#cccccc 70%,#d0d0d0)"></div>
<div class="pt" style="left:13px;top:851px;width:182px"></div>
<span class="a" style="left:15px;top:855.37px;white-space:nowrap;transform-origin:0 0;transform:scaleX(0.8651);font-size:13.33px;line-height:13.33px;font-weight:normal;color:#000;-webkit-text-stroke:.35px #000;letter-spacing:.6px">43CPI0101 (Chemical plant 1)</span>
<div class="btn" style="left:13px;top:875px;width:149px"></div>
<span class="a" style="left:22.099999999999994px;top:878.25px;white-space:nowrap;transform-origin:0 0;transform:scaleX(0.5914);font-size:15.94px;line-height:15.94px;font-weight:bold;color:#111;letter-spacing:1.8px">COLLECTIVE DISORDER</span>
<div class="btn" style="left:13px;top:895px;width:149px"></div>
<span class="a" style="left:16.150000000000006px;top:898.25px;white-space:nowrap;transform-origin:0 0;transform:scaleX(0.6047);font-size:15.94px;line-height:15.94px;font-weight:bold;color:#111;letter-spacing:1.8px">LEAKAGE DOSING PANEL</span>
<div class="btn" style="left:13px;top:915px;width:149px"></div>
<span class="a" style="left:35.85px;top:918.25px;white-space:nowrap;transform-origin:0 0;transform:scaleX(0.6002);font-size:15.94px;line-height:15.94px;font-weight:bold;color:#111;letter-spacing:1.8px">DISORDER PUMP 1</span>
<div class="btn" style="left:13px;top:935px;width:149px"></div>
<span class="a" style="left:34.15px;top:938.25px;white-space:nowrap;transform-origin:0 0;transform:scaleX(0.6197);font-size:15.94px;line-height:15.94px;font-weight:bold;color:#111;letter-spacing:1.8px">DISORDER PUMP 2</span>
<div class="btn" style="left:163px;top:875px;width:150px"></div>
<span class="a" style="left:165.75px;top:878.25px;white-space:nowrap;transform-origin:0 0;transform:scaleX(0.5995);font-size:15.94px;line-height:15.94px;font-weight:bold;color:#111;letter-spacing:1.8px">DISORDER ROOM AIR FAN</span>
<div class="btn" style="left:163px;top:895px;width:150px"></div>
<span class="a" style="left:167.75px;top:898.25px;white-space:nowrap;transform-origin:0 0;transform:scaleX(0.5902);font-size:15.94px;line-height:15.94px;font-weight:bold;color:#111;letter-spacing:1.8px">DISORDER OUTLET 1 E.R.</span>
<div class="btn" style="left:163px;top:915px;width:150px"></div>
<span class="a" style="left:179.65px;top:918.25px;white-space:nowrap;transform-origin:0 0;transform:scaleX(0.6025);font-size:15.94px;line-height:15.94px;font-weight:bold;color:#111;letter-spacing:1.8px">DISORDER OUTLET 2</span>
<div class="btn" style="left:315.5px;top:855px;width:148.5px"></div>
<span class="a" style="left:363.3px;top:858.25px;white-space:nowrap;transform-origin:0 0;transform:scaleX(0.5894);font-size:15.94px;line-height:15.94px;font-weight:bold;color:#111;letter-spacing:1.8px">REORDER</span>
<div class="btn" style="left:315.5px;top:875px;width:148.5px"></div>
<span class="a" style="left:335.35px;top:878.25px;white-space:nowrap;transform-origin:0 0;transform:scaleX(0.6360);font-size:15.94px;line-height:15.94px;font-weight:bold;color:#111;letter-spacing:1.8px">CONTROL 230 VAC</span>
<div class="btn" style="left:315.5px;top:895px;width:148.5px"></div>
<span class="a" style="left:339.5px;top:898.25px;white-space:nowrap;transform-origin:0 0;transform:scaleX(0.6222);font-size:15.94px;line-height:15.94px;font-weight:bold;color:#111;letter-spacing:1.8px">CONTROL 24 VDC</span>
<div class="btn" style="left:315.5px;top:915px;width:148.5px"></div>
<span class="a" style="left:323.15px;top:918.25px;white-space:nowrap;transform-origin:0 0;transform:scaleX(0.6495);font-size:15.94px;line-height:15.94px;font-weight:bold;color:#111;letter-spacing:1.8px">MINIMUM TANK LEVEL</span>
<div class="btn" style="left:315.5px;top:935px;width:148.5px"></div>
<span class="a" style="left:345.05px;top:938.25px;white-space:nowrap;transform-origin:0 0;transform:scaleX(0.6083);font-size:15.94px;line-height:15.94px;font-weight:bold;color:#111;letter-spacing:1.8px">OVERFILL TANK</span>
<div class="btn gb" style="left:466px;top:855px;width:150px"></div>
<span class="a" style="left:488.5px;top:858.25px;white-space:nowrap;transform-origin:0 0;transform:scaleX(0.6100);font-size:15.94px;line-height:15.94px;font-weight:bold;color:#111;letter-spacing:1.8px">OPERATION TIMER</span>
<div class="btn gb" style="left:466px;top:875px;width:150px"></div>
<span class="a" style="left:502.85px;top:878.25px;white-space:nowrap;transform-origin:0 0;transform:scaleX(0.5883);font-size:15.94px;line-height:15.94px;font-weight:bold;color:#111;letter-spacing:1.8px">PLANT LOCAL</span>
<div class="btn" style="left:466px;top:895px;width:150px"></div>
<span class="a" style="left:496.6px;top:898.25px;white-space:nowrap;transform-origin:0 0;transform:scaleX(0.6129);font-size:15.94px;line-height:15.94px;font-weight:bold;color:#111;letter-spacing:1.8px">PLANT REMOTE</span>
<div class="btn" style="left:466px;top:915px;width:150px"></div>
<span class="a" style="left:485.15px;top:918.25px;white-space:nowrap;transform-origin:0 0;transform:scaleX(0.6091);font-size:15.94px;line-height:15.94px;font-weight:bold;color:#111;letter-spacing:1.8px">OPERATION PUMP 1</span>
<div class="btn gb" style="left:466px;top:935px;width:150px"></div>
<span class="a" style="left:483.45px;top:938.25px;white-space:nowrap;transform-origin:0 0;transform:scaleX(0.6274);font-size:15.94px;line-height:15.94px;font-weight:bold;color:#111;letter-spacing:1.8px">OPERATION PUMP 2</span>
<div class="pt" style="left:13px;top:965px;width:182px"></div>
<span class="a" style="left:15px;top:969.37px;white-space:nowrap;transform-origin:0 0;transform:scaleX(0.8959);font-size:13.33px;line-height:13.33px;font-weight:normal;color:#000;-webkit-text-stroke:.35px #000;letter-spacing:.6px">43CPI0201 (Chemical plant 2)</span>
<div class="btn" style="left:13px;top:989px;width:149px"></div>
<span class="a" style="left:22.099999999999994px;top:992.25px;white-space:nowrap;transform-origin:0 0;transform:scaleX(0.5914);font-size:15.94px;line-height:15.94px;font-weight:bold;color:#111;letter-spacing:1.8px">COLLECTIVE DISORDER</span>
<div class="btn" style="left:13px;top:1009px;width:149px"></div>
<span class="a" style="left:16.150000000000006px;top:1012.25px;white-space:nowrap;transform-origin:0 0;transform:scaleX(0.6047);font-size:15.94px;line-height:15.94px;font-weight:bold;color:#111;letter-spacing:1.8px">LEAKAGE DOSING PANEL</span>
<div class="btn" style="left:13px;top:1029px;width:149px"></div>
<span class="a" style="left:35.85px;top:1032.25px;white-space:nowrap;transform-origin:0 0;transform:scaleX(0.6002);font-size:15.94px;line-height:15.94px;font-weight:bold;color:#111;letter-spacing:1.8px">DISORDER PUMP 1</span>
<div class="btn" style="left:13px;top:1049px;width:149px"></div>
<span class="a" style="left:34.15px;top:1052.25px;white-space:nowrap;transform-origin:0 0;transform:scaleX(0.6197);font-size:15.94px;line-height:15.94px;font-weight:bold;color:#111;letter-spacing:1.8px">DISORDER PUMP 2</span>
<div class="btn" style="left:163px;top:989px;width:150px"></div>
<span class="a" style="left:165.75px;top:992.25px;white-space:nowrap;transform-origin:0 0;transform:scaleX(0.5995);font-size:15.94px;line-height:15.94px;font-weight:bold;color:#111;letter-spacing:1.8px">DISORDER ROOM AIR FAN</span>
<div class="btn" style="left:163px;top:1009px;width:150px"></div>
<span class="a" style="left:167.75px;top:1012.25px;white-space:nowrap;transform-origin:0 0;transform:scaleX(0.5902);font-size:15.94px;line-height:15.94px;font-weight:bold;color:#111;letter-spacing:1.8px">DISORDER OUTLET 1 E.R.</span>
<div class="btn" style="left:163px;top:1029px;width:150px"></div>
<span class="a" style="left:179.65px;top:1032.25px;white-space:nowrap;transform-origin:0 0;transform:scaleX(0.6025);font-size:15.94px;line-height:15.94px;font-weight:bold;color:#111;letter-spacing:1.8px">DISORDER OUTLET 2</span>
<div class="btn" style="left:315.5px;top:969px;width:148.5px"></div>
<span class="a" style="left:363.3px;top:972.25px;white-space:nowrap;transform-origin:0 0;transform:scaleX(0.5894);font-size:15.94px;line-height:15.94px;font-weight:bold;color:#111;letter-spacing:1.8px">REORDER</span>
<div class="btn" style="left:315.5px;top:989px;width:148.5px"></div>
<span class="a" style="left:335.35px;top:992.25px;white-space:nowrap;transform-origin:0 0;transform:scaleX(0.6360);font-size:15.94px;line-height:15.94px;font-weight:bold;color:#111;letter-spacing:1.8px">CONTROL 230 VAC</span>
<div class="btn" style="left:315.5px;top:1009px;width:148.5px"></div>
<span class="a" style="left:339.5px;top:1012.25px;white-space:nowrap;transform-origin:0 0;transform:scaleX(0.6222);font-size:15.94px;line-height:15.94px;font-weight:bold;color:#111;letter-spacing:1.8px">CONTROL 24 VDC</span>
<div class="btn" style="left:315.5px;top:1029px;width:148.5px"></div>
<span class="a" style="left:323.15px;top:1032.25px;white-space:nowrap;transform-origin:0 0;transform:scaleX(0.6495);font-size:15.94px;line-height:15.94px;font-weight:bold;color:#111;letter-spacing:1.8px">MINIMUM TANK LEVEL</span>
<div class="btn" style="left:315.5px;top:1049px;width:148.5px"></div>
<span class="a" style="left:345.05px;top:1052.25px;white-space:nowrap;transform-origin:0 0;transform:scaleX(0.6083);font-size:15.94px;line-height:15.94px;font-weight:bold;color:#111;letter-spacing:1.8px">OVERFILL TANK</span>
<div class="btn gb" style="left:466px;top:969px;width:150px"></div>
<span class="a" style="left:488.5px;top:972.25px;white-space:nowrap;transform-origin:0 0;transform:scaleX(0.6100);font-size:15.94px;line-height:15.94px;font-weight:bold;color:#111;letter-spacing:1.8px">OPERATION TIMER</span>
<div class="btn gb" style="left:466px;top:989px;width:150px"></div>
<span class="a" style="left:502.85px;top:992.25px;white-space:nowrap;transform-origin:0 0;transform:scaleX(0.5883);font-size:15.94px;line-height:15.94px;font-weight:bold;color:#111;letter-spacing:1.8px">PLANT LOCAL</span>
<div class="btn" style="left:466px;top:1009px;width:150px"></div>
<span class="a" style="left:496.6px;top:1012.25px;white-space:nowrap;transform-origin:0 0;transform:scaleX(0.6129);font-size:15.94px;line-height:15.94px;font-weight:bold;color:#111;letter-spacing:1.8px">PLANT REMOTE</span>
<div class="btn gb" style="left:466px;top:1029px;width:150px"></div>
<span class="a" style="left:485.15px;top:1032.25px;white-space:nowrap;transform-origin:0 0;transform:scaleX(0.6091);font-size:15.94px;line-height:15.94px;font-weight:bold;color:#111;letter-spacing:1.8px">OPERATION PUMP 1</span>
<div class="btn" style="left:466px;top:1049px;width:150px"></div>
<span class="a" style="left:483.45px;top:1052.25px;white-space:nowrap;transform-origin:0 0;transform:scaleX(0.6274);font-size:15.94px;line-height:15.94px;font-weight:bold;color:#111;letter-spacing:1.8px">OPERATION PUMP 2</span>
<svg class="a" style="left:0;top:0" width="1920" height="1080"><rect x="10.5" y="848.5" width="609" height="114" fill="none" stroke="#fff" stroke-opacity=".6" stroke-width="3"/><rect x="10.5" y="848.5" width="609" height="114" fill="none" stroke="#000" stroke-width="3" stroke-dasharray="6 3"/></svg>
<svg class="a" style="left:0;top:0" width="1920" height="1080"><rect x="10.5" y="962.5" width="609" height="114" fill="none" stroke="#fff" stroke-opacity=".6" stroke-width="3"/><rect x="10.5" y="962.5" width="609" height="114" fill="none" stroke="#000" stroke-width="3" stroke-dasharray="6 3"/></svg>
<svg class="a" style="left:0;top:0" width="1920" height="48"><defs>
<linearGradient id="nb" x1="0" y1="0" x2="0" y2="1"><stop offset="0" stop-color="#3c8cf0"/><stop offset="1" stop-color="#0a4ab8"/></linearGradient>
<linearGradient id="ng" x1="0" y1="0" x2="0" y2="1"><stop offset="0" stop-color="#f0c838"/><stop offset="1" stop-color="#c09010"/></linearGradient>
<linearGradient id="wy" x1="0" y1="0" x2="0" y2="1"><stop offset="0" stop-color="#fff0a0"/><stop offset="1" stop-color="#f0c020"/></linearGradient>
<radialGradient id="clk" cx=".45" cy=".4" r=".6"><stop offset="0" stop-color="#f4fbff"/><stop offset=".8" stop-color="#c8dcf0"/><stop offset="1" stop-color="#8898a8"/></radialGradient>
<linearGradient id="calc" x1="0" y1="0" x2="1" y2="1"><stop offset="0" stop-color="#8cc8f8"/><stop offset="1" stop-color="#3a88d8"/></linearGradient>
</defs>
<polygon points="1164.5,24 1171.5,21.5 1171.5,35.5 1164.5,33" fill="#b4b4b8" stroke="#707880" stroke-width=".8"/>
<polygon points="1171.5,21.5 1182,12.5 1192,23 1192,34.5 1180,37 1171.5,35.5" fill="#f6f6f6" stroke="#707888" stroke-width=".9"/>
<polygon points="1162.8,23.5 1173.5,11.5 1182.5,11.5 1171.8,23" fill="#4a90e2" stroke="#2a5aa8" stroke-width=".8"/>
<path d="M1182.5 11.5 L1193 22.8" stroke="#3a78d0" stroke-width="2.2" stroke-linecap="round"/>
<rect x="1174.5" y="25" width="4" height="4" fill="#a8a098" stroke="#707070" stroke-width=".7"/>
<rect x="1182.5" y="26.5" width="5.5" height="9.5" fill="#3a8ae0" stroke="#2a5a9a" stroke-width=".7"/>
<path d="M1215 10 L1229.5 38 L1200.5 38 Z" fill="url(#wy)" stroke="#e0b020" stroke-width="1" stroke-linejoin="round"/>
<path d="M1213.3 18 L1216.7 18 L1216 30 L1214 30 Z" fill="#fff"/><circle cx="1215" cy="33.5" r="1.7" fill="#fff"/>
<rect x="1235.5" y="9.5" width="30" height="29.5" fill="#fafafa" stroke="#787878" stroke-width="1.2"/>
<line x1="1240" y1="10" x2="1240" y2="39" stroke="#c8b8c8" stroke-width=".6"/>
<line x1="1245" y1="10" x2="1245" y2="39" stroke="#c8b8c8" stroke-width=".6"/>
<line x1="1250" y1="10" x2="1250" y2="39" stroke="#c8b8c8" stroke-width=".6"/>
<line x1="1255" y1="10" x2="1255" y2="39" stroke="#c8b8c8" stroke-width=".6"/>
<line x1="1260" y1="10" x2="1260" y2="39" stroke="#c8b8c8" stroke-width=".6"/>
<line x1="1265" y1="10" x2="1265" y2="39" stroke="#c8b8c8" stroke-width=".6"/>
<line x1="1236" y1="14" x2="1265" y2="14" stroke="#c8b8c8" stroke-width=".6"/>
<line x1="1236" y1="19" x2="1265" y2="19" stroke="#c8b8c8" stroke-width=".6"/>
<line x1="1236" y1="24" x2="1265" y2="24" stroke="#c8b8c8" stroke-width=".6"/>
<line x1="1236" y1="29" x2="1265" y2="29" stroke="#c8b8c8" stroke-width=".6"/>
<line x1="1236" y1="34" x2="1265" y2="34" stroke="#c8b8c8" stroke-width=".6"/>
<polyline points="1237,21 1243,17 1247,20 1251,15 1256,18 1263,12" fill="none" stroke="#30a030" stroke-width="2"/>
<polyline points="1237,34 1244,30 1248,24 1251,16 1254,22 1258,23 1263,22" fill="none" stroke="#3060c0" stroke-width="1.8"/>
<rect x="1269.4" y="3.4" width="13.7" height="13.5" rx="2" fill="url(#nb)" stroke="#0a3a90" stroke-width=".8"/>
<text x="1276.2" y="14.2" text-anchor="middle" font-family="Liberation Sans" font-weight="bold" font-size="12" fill="#fff">1</text>
<rect x="1269.4" y="18.299999999999997" width="13.7" height="13.5" rx="2" fill="url(#nb)" stroke="#0a3a90" stroke-width=".8"/>
<text x="1276.2" y="29.099999999999998" text-anchor="middle" font-family="Liberation Sans" font-weight="bold" font-size="12" fill="#fff">2</text>
<rect x="1269.4" y="33.199999999999996" width="13.7" height="13.5" rx="2" fill="url(#nb)" stroke="#0a3a90" stroke-width=".8"/>
<text x="1276.2" y="44.0" text-anchor="middle" font-family="Liberation Sans" font-weight="bold" font-size="12" fill="#fff">3</text>
<rect x="1284.4" y="3.4" width="13.7" height="13.5" rx="2" fill="url(#nb)" stroke="#0a3a90" stroke-width=".8"/>
<text x="1291.2" y="14.2" text-anchor="middle" font-family="Liberation Sans" font-weight="bold" font-size="12" fill="#fff">4</text>
<rect x="1284.4" y="18.299999999999997" width="13.7" height="13.5" rx="2" fill="url(#nb)" stroke="#0a3a90" stroke-width=".8"/>
<text x="1291.2" y="29.099999999999998" text-anchor="middle" font-family="Liberation Sans" font-weight="bold" font-size="12" fill="#fff">5</text>
<rect x="1284.4" y="33.199999999999996" width="13.7" height="13.5" rx="2" fill="url(#nb)" stroke="#0a3a90" stroke-width=".8"/>
<text x="1291.2" y="44.0" text-anchor="middle" font-family="Liberation Sans" font-weight="bold" font-size="12" fill="#fff">6</text>
<rect x="1305.5" y="12.5" width="30" height="26" rx="1.5" fill="#fff" stroke="#3a7ad0" stroke-width="1.6"/>
<rect x="1305.5" y="12.5" width="30" height="4.5" fill="#3a88e0"/>
<line x1="1309" y1="17" x2="1309" y2="38" stroke="#5a98e8" stroke-width="1.1"/>
<line x1="1313" y1="17" x2="1313" y2="38" stroke="#5a98e8" stroke-width="1.1"/>
<line x1="1317" y1="17" x2="1317" y2="38" stroke="#5a98e8" stroke-width="1.1"/>
<line x1="1321" y1="17" x2="1321" y2="38" stroke="#5a98e8" stroke-width="1.1"/>
<line x1="1325" y1="17" x2="1325" y2="38" stroke="#5a98e8" stroke-width="1.1"/>
<line x1="1329" y1="17" x2="1329" y2="38" stroke="#5a98e8" stroke-width="1.1"/>
<line x1="1333" y1="17" x2="1333" y2="38" stroke="#5a98e8" stroke-width="1.1"/>
<line x1="1306" y1="21" x2="1335" y2="21" stroke="#5a98e8" stroke-width="1.1"/>
<line x1="1306" y1="25" x2="1335" y2="25" stroke="#5a98e8" stroke-width="1.1"/>
<line x1="1306" y1="29" x2="1335" y2="29" stroke="#5a98e8" stroke-width="1.1"/>
<line x1="1306" y1="33" x2="1335" y2="33" stroke="#5a98e8" stroke-width="1.1"/>
<line x1="1306" y1="37" x2="1335" y2="37" stroke="#5a98e8" stroke-width="1.1"/>
<linearGradient id="gear" x1="0" y1="0" x2="1" y2="1"><stop offset="0" stop-color="#f4f2fa"/><stop offset=".5" stop-color="#e0dcf0"/><stop offset="1" stop-color="#b8a8dc"/></linearGradient>
<polygon points="1371.6,27.6 1369.9,32.1 1366.1,31.5 1364.7,33.0 1365.6,36.8 1361.3,38.8 1359.0,35.7 1357.0,35.8 1354.9,39.1 1350.4,37.4 1351.0,33.6 1349.5,32.2 1345.7,33.1 1343.7,28.8 1346.8,26.5 1346.7,24.5 1343.4,22.4 1345.1,17.9 1348.9,18.5 1350.3,17.0 1349.4,13.2 1353.7,11.2 1356.0,14.3 1358.0,14.2 1360.1,10.9 1364.6,12.6 1364.0,16.4 1365.5,17.8 1369.3,16.9 1371.3,21.2 1368.2,23.5 1368.3,25.5" fill="url(#gear)" stroke="#5c5878" stroke-width="1.1" stroke-linejoin="round"/>
<circle cx="1357" cy="24" r="3.6" fill="#e8e6f6" stroke="#4c4c68" stroke-width="1.4"/>
<rect x="1374.4" y="3.4" width="13.7" height="13.5" rx="2" fill="url(#ng)" stroke="#a07808" stroke-width=".8"/>
<text x="1381.2" y="14.2" text-anchor="middle" font-family="Liberation Sans" font-weight="bold" font-size="12" fill="#fff">1</text>
<rect x="1374.4" y="18.299999999999997" width="13.7" height="13.5" rx="2" fill="url(#ng)" stroke="#a07808" stroke-width=".8"/>
<text x="1381.2" y="29.099999999999998" text-anchor="middle" font-family="Liberation Sans" font-weight="bold" font-size="12" fill="#fff">2</text>
<rect x="1374.4" y="33.199999999999996" width="13.7" height="13.5" rx="2" fill="url(#ng)" stroke="#a07808" stroke-width=".8"/>
<text x="1381.2" y="44.0" text-anchor="middle" font-family="Liberation Sans" font-weight="bold" font-size="12" fill="#fff">3</text>
<path d="M1396 11 L1420 12 L1420 37 L1397 40 Z" fill="url(#calc)" stroke="#2a6ab8" stroke-width="1"/>
<rect x="1399" y="14" width="17" height="5" fill="#90e070"/>
<rect x="1400.0" y="22.5" width="3.6" height="3" fill="#e04040"/>
<rect x="1405.2" y="22.5" width="3.6" height="3" fill="#f4f8ff"/>
<rect x="1410.4" y="22.5" width="3.6" height="3" fill="#f4f8ff"/>
<rect x="1400.0" y="27.5" width="3.6" height="3" fill="#f4f8ff"/>
<rect x="1405.2" y="27.5" width="3.6" height="3" fill="#f4f8ff"/>
<rect x="1410.4" y="27.5" width="3.6" height="3" fill="#f4f8ff"/>
<rect x="1400.0" y="32.5" width="3.6" height="3" fill="#f4f8ff"/>
<rect x="1405.2" y="32.5" width="3.6" height="3" fill="#f4f8ff"/>
<rect x="1410.4" y="32.5" width="3.6" height="3" fill="#f4f8ff"/>
<rect x="1421.4" y="3.4" width="13.7" height="13.5" rx="2" fill="url(#nb)" stroke="#0a3a90" stroke-width=".8"/>
<text x="1428.2" y="14.2" text-anchor="middle" font-family="Liberation Sans" font-weight="bold" font-size="12" fill="#fff">1</text>
<rect x="1421.4" y="18.299999999999997" width="13.7" height="13.5" rx="2" fill="url(#nb)" stroke="#0a3a90" stroke-width=".8"/>
<text x="1428.2" y="29.099999999999998" text-anchor="middle" font-family="Liberation Sans" font-weight="bold" font-size="12" fill="#fff">2</text>
<rect x="1421.4" y="33.199999999999996" width="13.7" height="13.5" rx="2" fill="url(#nb)" stroke="#0a3a90" stroke-width=".8"/>
<text x="1428.2" y="44.0" text-anchor="middle" font-family="Liberation Sans" font-weight="bold" font-size="12" fill="#fff">3</text>
<circle cx="1455" cy="25.3" r="14.5" fill="#a0a8b0"/><circle cx="1455" cy="25.3" r="12.5" fill="url(#clk)"/>
<polyline points="1449,18 1455,25 1461,20" fill="none" stroke="#111" stroke-width="2"/>
<rect x="1472.4" y="3.4" width="13.7" height="13.5" rx="2" fill="url(#nb)" stroke="#0a3a90" stroke-width=".8"/>
<text x="1479.2" y="14.2" text-anchor="middle" font-family="Liberation Sans" font-weight="bold" font-size="12" fill="#fff">1</text>
<rect x="1472.4" y="18.299999999999997" width="13.7" height="13.5" rx="2" fill="url(#nb)" stroke="#0a3a90" stroke-width=".8"/>
<text x="1479.2" y="29.099999999999998" text-anchor="middle" font-family="Liberation Sans" font-weight="bold" font-size="12" fill="#fff">2</text>
<rect x="1472.4" y="33.199999999999996" width="13.7" height="13.5" rx="2" fill="url(#nb)" stroke="#0a3a90" stroke-width=".8"/>
<text x="1479.2" y="44.0" text-anchor="middle" font-family="Liberation Sans" font-weight="bold" font-size="12" fill="#fff">3</text>
<line x1="1511" y1="26" x2="1519" y2="35" stroke="#222" stroke-width="3.5" stroke-linecap="round"/>
<circle cx="1504" cy="19" r="8.5" fill="#f8f8f8" stroke="#b0b0b0" stroke-width="2.5"/>
<circle cx="1498" cy="31" r="7" fill="#4a78d8" stroke="#2a4aa0" stroke-width=".8"/><rect x="1493.5" y="29.5" width="9" height="3" fill="#fff"/>
<linearGradient id="db" x1="0" x2="1"><stop offset="0" stop-color="#5878a8"/><stop offset=".5" stop-color="#a8c4e8"/><stop offset="1" stop-color="#6a88b8"/></linearGradient>
<path d="M1545 5 V16 Q1551 19 1557 16 V5 Z" fill="url(#db)" stroke="#50688c" stroke-width=".7"/>
<ellipse cx="1551" cy="5" rx="6" ry="2.2" fill="#d0e0f4" stroke="#50688c" stroke-width=".7"/>
<path d="M1545 9 Q1551 12 1557 9 M1545 12.5 Q1551 15.5 1557 12.5" fill="none" stroke="#e0ecf8" stroke-width=".9"/>
<rect x="1558" y="12" width="9.5" height="9" rx="1" fill="#a8d0f4" stroke="#6080a8" stroke-width=".8"/>
<rect x="1560" y="21" width="7" height="3.5" fill="#909498"/>
<polygon points="1546.5,16 1552.5,16 1552.5,13.5 1559,19 1552.5,24.5 1552.5,22 1546.5,22" fill="#38c038" stroke="#1e7a1e" stroke-width=".8"/>
<g transform="rotate(-30 1661 14)"><rect x="1652" y="6" width="18" height="17" fill="#fff" stroke="#a8a8a8" stroke-width=".8"/><rect x="1652" y="6" width="18" height="5" fill="#d82a20"/><path d="M1654 12.5 V21.5 M1657.5 12.5 V21.5 M1661 12.5 V21.5 M1664.5 12.5 V21.5 M1668 12.5 V21.5 M1653 14.5 H1669 M1653 17.5 H1669 M1653 20.5 H1669" stroke="#c0a8a8" stroke-width=".7"/><rect x="1659.5" y="15" width="3.5" height="3.5" fill="#e04040"/></g>
<rect x="1810.5" y="2.5" width="21" height="17" fill="#a0a0a0" stroke="#808080" stroke-width=".8"/><rect x="1813" y="5" width="16" height="12" fill="#484848"/><path d="M1814 20 L1828 20 L1826 25 L1816 25 Z" fill="#222"/>
<rect x="1820" y="29" width="11" height="14" fill="#f8f8f0" stroke="#a0a0a0" stroke-width=".8"/><rect x="1811" y="28" width="10" height="16" fill="#4a90e0"/><circle cx="1816" cy="33" r="3" fill="#e0a040"/><path d="M1811.5 43 Q1816 35 1820.5 43 Z" fill="#2060c0"/>
</svg>
<span class="a" style="left:1579.3px;top:6.55px;white-space:nowrap;transform-origin:0 0;transform:scaleX(0.6638);font-size:15.94px;line-height:15.94px;font-weight:bold;color:#1010e0;letter-spacing:1.5px">SERVER-1</span>
<span class="a" style="left:1675.6px;top:6.55px;white-space:nowrap;transform-origin:0 0;transform:scaleX(0.7605);font-size:15.94px;line-height:15.94px;font-weight:bold;color:#1010e0;letter-spacing:1.5px">08.07.2011</span>
<span class="a" style="left:1763px;top:6.55px;white-space:nowrap;transform-origin:0 0;transform:scaleX(0.6963);font-size:15.94px;line-height:15.94px;font-weight:bold;color:#1010e0;letter-spacing:1.5px">11:55</span>
<span class="a" style="left:1838.1px;top:6.05px;white-space:nowrap;transform-origin:0 0;transform:scaleX(0.7110);font-size:15.94px;line-height:15.94px;font-weight:bold;color:#1010e0;letter-spacing:1.5px">CLIENT-4</span>
<span class="a" style="left:1838px;top:26.13px;white-space:nowrap;transform-origin:0 0;transform:scaleX(0.8756);font-size:13.96px;line-height:13.96px;font-weight:bold;color:#1010e0;letter-spacing:1px">process</span>
<div class="a" style="left:1628px;top:28px;width:179px;height:18px;border:2px solid #000;background:#fff"></div>
<div class="a" style="left:1630px;top:30px;width:23.799999999999955px;height:14px;background:#90d890"></div>
<span class="a" style="left:1632.4px;top:32.29px;white-space:nowrap;transform-origin:0 0;transform:scaleX(0.7500);font-size:11.30px;line-height:11.30px;font-weight:bold;color:#101810;letter-spacing:1.5px">PSR</span>
<div class="a" style="left:1654.8px;top:30px;width:24.200000000000045px;height:14px;background:#90d890"></div>
<span class="a" style="left:1657.9px;top:32.29px;white-space:nowrap;transform-origin:0 0;transform:scaleX(0.7661);font-size:11.30px;line-height:11.30px;font-weight:bold;color:#101810;letter-spacing:1.5px">PTF</span>
<div class="a" style="left:1680.8px;top:30px;width:24.0px;height:14px;background:#90d890"></div>
<span class="a" style="left:1683.4px;top:32.29px;white-space:nowrap;transform-origin:0 0;transform:scaleX(0.7488);font-size:11.30px;line-height:11.30px;font-weight:bold;color:#101810;letter-spacing:1.5px">PTR</span>
<div class="a" style="left:1706px;top:30px;width:24px;height:14px;background:#90d890"></div>
<span class="a" style="left:1712.6px;top:32.29px;white-space:nowrap;transform-origin:0 0;transform:scaleX(0.7753);font-size:11.30px;line-height:11.30px;font-weight:bold;color:#101810;letter-spacing:1.5px">AS</span>
<div class="a" style="left:1732px;top:30px;width:24px;height:14px;background:#90d890"></div>
<span class="a" style="left:1734px;top:32.29px;white-space:nowrap;transform-origin:0 0;transform:scaleX(0.7546);font-size:11.30px;line-height:11.30px;font-weight:bold;color:#101810;letter-spacing:1.5px">ARS</span>
<div class="a" style="left:1757px;top:30px;width:23px;height:14px;background:#90d890"></div>
<span class="a" style="left:1760px;top:32.29px;white-space:nowrap;transform-origin:0 0;transform:scaleX(0.7644);font-size:11.30px;line-height:11.30px;font-weight:bold;color:#101810;letter-spacing:1.5px">DIG</span>
<div class="a" style="left:1780px;top:30px;width:24px;height:14px;background:#9a9a9a"></div>
<div class="a" style="left:1781.5px;top:37.5px;width:21px;height:0;border-top:2px dashed #222"></div>
</body></html>
